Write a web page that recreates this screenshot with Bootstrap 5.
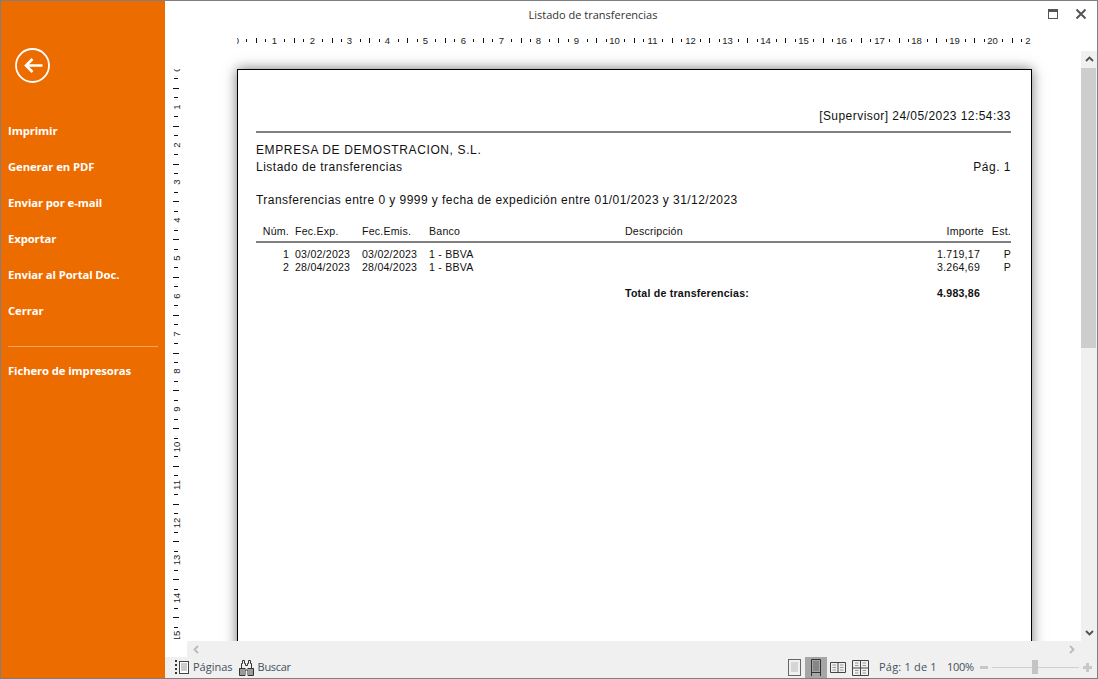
<!DOCTYPE html>
<html lang="es">
<head>
    <meta charset="UTF-8">
    <meta name="viewport" content="width=device-width, initial-scale=1.0">
    <title>Listado de transferencias</title>
    <link href="https://cdn.jsdelivr.net/npm/bootstrap@5.3.0/dist/css/bootstrap.min.css" rel="stylesheet">
    <style>
        html, body { height: 100%; overflow: hidden; background: #fff; }
        .app-win { height: 679px; border: 1px solid #7f7f7f; font-family: "Open Sans", "Liberation Sans", sans-serif; color: #444; }
        .side-panel { width: 164px; background: #ed6c00; color: #fff; }
        .back-btn { margin: 47px 0 0 14px; height: 35px; width: 35px; display: block; }
        .side-menu { margin-top: 30px; }
        .side-item { height: 36px; line-height: 36px; padding-left: 7px; font-size: 11.3px; font-weight: 700; color: #fff; text-decoration: none; display: block; letter-spacing: -.1px; }
        .side-sep { margin: 17px 7px 6px; border-top: 1px solid #f4a566; }
        .title-bar { height: 30px; font-size: 11px; color: #333; padding-right: 76px; }
        .win-btns { right: 10px; top: 7px; }
        .ruler-top { height: 21px; padding-left: 72px; }
        .ruler-top svg { display: block; }
        .ruler-text { font: 9.5px "Liberation Sans", sans-serif; fill: #222; text-anchor: middle; }
        .ruler-left { width: 72px; padding-top: 18px; }
        .view-area { min-height: 0; }
        .sheet-wrap { padding-top: 18px; width: 844px; }
        .sheet { width: 795px; height: 600px; border: 1px solid #000; border-bottom: 0; background: #fff; box-shadow: 0 0 12px rgba(0, 0, 0, .55); padding: 38px 20px 0 18px; font-family: "Liberation Sans", Arial, sans-serif; color: #111; font-size: 12px; line-height: 17px; letter-spacing: .5px; }
        .sheet-rule { height: 2px; background: #808080; }
        .rep-stamp { margin-bottom: 6px; letter-spacing: .45px; }
        .rep-company { margin-top: 9px; letter-spacing: .62px; }
        .rep-filter { margin-top: 16px; letter-spacing: .45px; }
        .rep-table { width: 755px; table-layout: fixed; margin-top: 16px; font-size: 10.6px; line-height: 13px; letter-spacing: .22px; border-collapse: collapse; }
        .rep-table th { font-weight: 400; padding: 0 0 3px; border-bottom: 2px solid #808080; }
        .rep-table td { padding: 0; }
        .rep-table tbody tr:first-child td { padding-top: 5px; }
        .rep-table .gap-row td { padding-top: 13px; font-weight: 700; }
        .c-num { width: 39px; }
        .c-date { width: 67px; }
        .c-bank { width: 196px; }
        .c-desc { width: 289px; }
        .c-imp { width: 70px; }
        .c-est { width: 27px; }
        .num-cell { padding-right: 6px !important; text-align: right; }
        .imp-head { text-align: right; padding-right: 0 !important; }
        .imp-cell { text-align: right; padding-right: 4px !important; }
        .vscroll { width: 16px; background: #f0f0f0; }
        .vscroll-btn { height: 17px; }
        .vscroll-thumb { height: 280px; background: #cdcdcd; margin-right: 1px; }
        .hscroll { height: 16px; margin-left: 22px; background: #f0f0f0; padding: 0 22px 0 6px; }
        .status-bar { height: 21px; background: #f0f0f0; font-size: 11px; color: #44505c; padding-left: 10px; }
        .status-find { letter-spacing: -.3px; }
        .view-btn { width: 22px; height: 21px; }
        .view-btn-on { background: #a6a6a6; }
        .zoom-track { width: 87px; height: 1px; background: #cfcfcf; }
        .zoom-thumb { width: 6px; height: 14px; background: #c4c4c4; left: 40px; top: -7px; }
        .page-label { margin-left: 8px; width: 68px; letter-spacing: .2px; white-space: nowrap; }
        .zoom-label { width: 33px; letter-spacing: -.3px; }
    </style>
</head>
<body>
<div class="app-win d-flex">
    <aside class="side-panel flex-shrink-0">
        <svg class="back-btn" viewBox="0 0 35 35">
            <circle cx="17.500" cy="17.500" r="16.500" fill="none" stroke="#fff" stroke-width="1.800"/>
            <path d="M11 17.500H27.500M17.500 11L11 17.500L17.500 24" fill="none" stroke="#fff" stroke-width="2.600"/>
        </svg>
        <nav class="side-menu">
            <a class="side-item" href="#">Imprimir</a>
            <a class="side-item" href="#">Generar en PDF</a>
            <a class="side-item" href="#">Enviar por e-mail</a>
            <a class="side-item" href="#">Exportar</a>
            <a class="side-item" href="#">Enviar al Portal Doc.</a>
            <a class="side-item" href="#">Cerrar</a>
            <div class="side-sep"></div>
            <a class="side-item" href="#">Fichero de impresoras</a>
        </nav>
    </aside>

    <main class="flex-grow-1 d-flex flex-column" style="min-width:0">
        <div class="title-bar d-flex align-items-center justify-content-center position-relative">
            <span>Listado de transferencias</span>
            <div class="win-btns position-absolute d-flex gap-3">
                <svg width="12" height="12" viewBox="0 0 12 12"><rect x="1.500" y="1.500" width="9" height="9" fill="none" stroke="#555"/><rect x="1" y="1" width="10" height="3" fill="#555"/></svg>
                <svg width="12" height="12" viewBox="0 0 12 12"><path d="M1.500 1.500L10.500 10.500M10.500 1.500L1.500 10.500" stroke="#555" stroke-width="2"/></svg>
            </div>
        </div>

        <div class="ruler-top"><svg id="rulerH" width="794" height="21"></svg></div>

        <div class="view-area flex-grow-1 d-flex overflow-hidden">
            <div class="ruler-left flex-shrink-0"><svg id="rulerV" width="72" height="570" class="d-block"></svg></div>
            <div class="sheet-wrap flex-shrink-0">
                <div class="sheet">
                    <div class="rep-stamp text-end">[Supervisor] 24/05/2023 12:54:33</div>
                    <div class="sheet-rule"></div>
                    <div class="rep-company">EMPRESA DE DEMOSTRACION, S.L.</div>
                    <div class="d-flex justify-content-between"><span>Listado de transferencias</span><span>Pág. 1</span></div>
                    <div class="rep-filter">Transferencias entre 0 y 9999 y fecha de expedición entre 01/01/2023 y 31/12/2023</div>
                    <table class="rep-table">
                        <colgroup>
                            <col class="c-num"><col class="c-date"><col class="c-date"><col class="c-bank"><col class="c-desc"><col class="c-imp"><col class="c-est">
                        </colgroup>
                        <thead>
                            <tr><th class="num-cell">Núm.</th><th>Fec.Exp.</th><th>Fec.Emis.</th><th>Banco</th><th>Descripción</th><th class="imp-head">Importe</th><th class="text-end">Est.</th></tr>
                        </thead>
                        <tbody>
                            <tr><td class="num-cell">1</td><td>03/02/2023</td><td>03/02/2023</td><td>1 - BBVA</td><td></td><td class="imp-cell">1.719,17</td><td class="text-end">P</td></tr>
                            <tr><td class="num-cell">2</td><td>28/04/2023</td><td>28/04/2023</td><td>1 - BBVA</td><td></td><td class="imp-cell">3.264,69</td><td class="text-end">P</td></tr>
                            <tr class="gap-row"><td colspan="4"></td><td>Total de transferencias:</td><td class="imp-cell">4.983,86</td><td></td></tr>
                        </tbody>
                    </table>
                </div>
            </div>
            <div class="flex-grow-1"></div>
            <div class="vscroll flex-shrink-0 d-flex flex-column">
                <div class="vscroll-btn d-flex align-items-center justify-content-center">
                    <svg width="9" height="6" viewBox="0 0 9 6"><path d="M1 5L4.500 1.500L8 5" fill="none" stroke="#505050" stroke-width="1.800"/></svg>
                </div>
                <div class="vscroll-thumb"></div>
                <div class="flex-grow-1"></div>
                <div class="vscroll-btn d-flex align-items-center justify-content-center">
                    <svg width="9" height="6" viewBox="0 0 9 6"><path d="M1 1L4.500 4.500L8 1" fill="none" stroke="#505050" stroke-width="1.800"/></svg>
                </div>
            </div>
        </div>

        <div class="hscroll d-flex align-items-center justify-content-between flex-shrink-0">
            <svg width="6" height="9" viewBox="0 0 6 9"><path d="M5 1L1.500 4.500L5 8" fill="none" stroke="#bbb" stroke-width="1.800"/></svg>
            <svg width="6" height="9" viewBox="0 0 6 9"><path d="M1 1L4.500 4.500L1 8" fill="none" stroke="#bbb" stroke-width="1.800"/></svg>
        </div>

        <div class="status-bar d-flex align-items-center flex-shrink-0">
            <svg width="15" height="15" viewBox="0 0 15 15" style="margin-right:3px">
                <path d="M1 0V2M1 4V6M1 8V10M1 12V14" stroke="#333" stroke-width="2"/>
                <rect x="4.500" y="1.500" width="9" height="12" fill="#fff" stroke="#444"/>
                <path d="M6 4H12M6 6H12M6 8H12M6 10H12" stroke="#999"/>
            </svg>
            <span>Páginas</span>
            <svg width="17" height="16" viewBox="0 0 17 16" style="margin:0 3px 0 5px">
                <path d="M4.500 .5H6.500V3.500H7.500V5.500H9.500V3.500H10.500V.5H12.500V3.500H13.500V8.500H15.500V15.500H10V10H7V15.500H1.500V8.500H3.500V3.500H4.500Z" fill="#f0f0f0" stroke="#333"/>
                <path d="M2 9H7V15H2ZM10 9H15V15H10Z" fill="#9a9a9a"/>
                <path d="M1.500 8.500H7.500M9.500 8.500H15.500" stroke="#333"/>
            </svg>
            <span class="status-find">Buscar</span>
            <div class="ms-auto d-flex align-items-center">
                <div class="view-btn d-flex align-items-center justify-content-center">
                    <svg width="13" height="17" viewBox="0 0 13 17"><rect x=".5" y=".5" width="12" height="16" fill="none" stroke="#666"/><path d="M3 4H10M3 6H10M3 8H10M3 10H10M3 12H10" stroke="#bbb"/></svg>
                </div>
                <div class="view-btn view-btn-on d-flex align-items-center justify-content-center">
                    <svg width="10" height="17" viewBox="0 0 10 17"><path d="M.5 17V.5H9.500V17M.5 13.500H9.500" fill="none" stroke="#333"/><path d="M2 3H8M2 5H8M2 7H8M2 9H8M2 11H8" stroke="#666"/></svg>
                </div>
                <div class="view-btn d-flex align-items-center justify-content-center">
                    <svg width="16" height="11" viewBox="0 0 16 11"><path d="M.5.5H15.500V10.500H.5ZM8 .5V10.500" fill="none" stroke="#444"/><path d="M2.500 3H6M2.500 5.500H6M2.500 8H6M10 3H13.500M10 5.500H13.500M10 8H13.500" stroke="#999"/></svg>
                </div>
                <div class="view-btn d-flex align-items-center justify-content-center">
                    <svg width="17" height="16" viewBox="0 0 17 16"><path d="M.5.5H16.500V15.500H.5ZM8.500.5V15.500M.5 8H16.500" fill="none" stroke="#444"/><path d="M3 3H6.500M3 5.500H6.500M10.500 3H14M10.500 5.500H14M3 10.500H6.500M3 13H6.500M10.500 10.500H14M10.500 13H14" stroke="#999"/></svg>
                </div>
                <span class="page-label">Pág: 1 de 1</span>
                <span class="zoom-label">100%</span>
                <svg width="8" height="3" viewBox="0 0 8 3" class="me-1"><rect width="8" height="3" fill="#c8c8c8"/></svg>
                <div class="zoom-track position-relative"><div class="zoom-thumb position-absolute"></div></div>
                <svg width="9" height="9" viewBox="0 0 9 9" class="ms-1" style="margin-right:5px"><path d="M3 0H6V3H9V6H6V9H3V6H0V3H3Z" fill="#c8c8c8"/></svg>
            </div>
        </div>
    </main>
</div>

<script src="https://cdn.jsdelivr.net/npm/bootstrap@5.3.0/dist/js/bootstrap.bundle.min.js"></script>
<script>
    // las reglas tienen una marca cada 1/4 cm, numero cada cm
    const NS = "http://www.w3.org/2000/svg";
    const STEP = 37.8 / 4;

    function addEl(svg, name, attrs, text) {
        const el = document.createElementNS(NS, name);
        for (const k in attrs) el.setAttribute(k, attrs[k]);
        if (text !== undefined) el.textContent = text;
        svg.appendChild(el);
    }

    const rulerH = document.getElementById("rulerH");
    for (let i = 0; i * STEP < 800; i++) {
        const x = Math.round(i * STEP);
        if (i % 4 === 0) {
            addEl(rulerH, "text", { x: x - 0.5, y: 13.5, class: "ruler-text" }, i / 4);
        } else {
            const big = i % 4 === 2;
            addEl(rulerH, "line", { x1: x + 0.5, x2: x + 0.5, y1: big ? 8 : 9, y2: big ? 13 : 12, stroke: "#111" });
        }
    }

    const rulerV = document.getElementById("rulerV");
    for (let i = 0; i * STEP < 575; i++) {
        const y = Math.round(i * STEP);
        if (i % 4 === 0) {
            addEl(rulerV, "text", { x: 0, y: 0, class: "ruler-text", transform: `translate(14.5 ${y}) rotate(-90)` }, i / 4);
        } else {
            const big = i % 4 === 2;
            addEl(rulerV, "line", { x1: big ? 8 : 9, x2: big ? 14 : 13, y1: y + 0.5, y2: y + 0.5, stroke: "#111" });
        }
    }
</script>
</body>
</html>
